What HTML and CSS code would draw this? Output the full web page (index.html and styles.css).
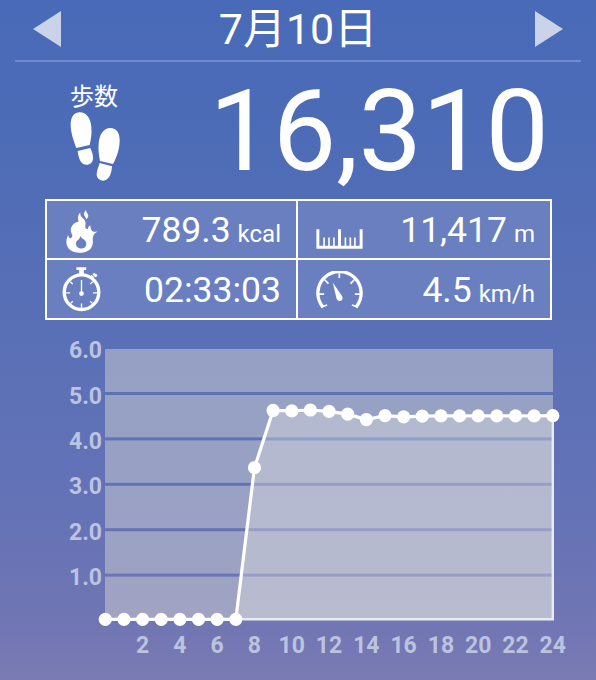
FILE: index.html
```html
<!DOCTYPE html>
<html lang="ja">
<head>
<meta charset="UTF-8">
<meta name="viewport" content="width=device-width, initial-scale=1.0">
<title>歩数計</title>
<link rel="stylesheet" href="styles.css">
</head>
<body>
    <div class="wrapper">
        <div class="header">
            <svg class="arrow" viewBox="0 0 28 36"><path d="M28 0V36L0 18Z"/></svg>
            <div class="date">7<span class="kanji">月</span>10<span class="kanji">日</span></div>
            <svg class="arrow" viewBox="0 0 28 36"><path d="M0 0V36L28 18Z"/></svg>
        </div>

        <div class="steps">
            <div class="steps-label">
                <span>歩数</span>
                <svg class="feet" viewBox="90 110 150 207">
                    <path d="M119 111C101 111 92 127 92 147C92 172 100 194 109 218L149 209C153 190 156 175 154 154C152 130 140 111 119 111Z"/>
                    <path d="M113 227L151 218C156 229 160 240 159 250C158 261 150 268 140 268C121 268 116 249 113 227Z"/>
                    <path d="M211 158C190 158 178 179 176 204C174 224 177 240 180 257L219 266C231 244 239 221 239 195C239 173 230 158 211 158Z"/>
                    <path d="M179 263L216 273C215 293 208 316 189 316C178 316 170 308 170 297C170 285 176 274 179 263Z"/>
                </svg>
            </div>
            <div class="steps-count">16,310</div>
        </div>

        <div class="stats">
            <div class="cell">
                <svg class="flame" viewBox="78 42 96 130">
                    <path fill-rule="evenodd" d="M121 49C112 59 113 68 116 77C102 80 92 91 92 103C92 110 96 114 97 120C96 126 91 129 87 126C85 124 85 120 85 117C80 125 77 136 80 147C84 163 99 171 119 171C140 171 155 162 158 146C160 137 157 129 160 121C162 114 167 111 173 107C165 108 158 108 155 103C152 99 152 94 151 89C146 91 144 95 144 99C139 101 135 97 136 91C137 83 138 77 132 70C126 64 119 60 121 49ZM121 119C122 127 127 128 132 131C141 137 141 151 133 156C127 160 116 159 111 153C106 147 106 139 112 134C118 130 121 126 121 119Z"/>
                    <path d="M138 42C132 49 130 54 134 60C136 64 138 66 139 70C145 64 147 59 143 53C140 49 138 46 138 42Z"/>
                </svg>
                <div class="value">789.3<span class="unit">kcal</span></div>
            </div>
            <div class="cell">
                <svg class="ruler" viewBox="78 100 141 61">
                    <path d="M78 101H87V151H144V101H153V151H210V101H219V160H78ZM99 126H104V151H99ZM114 126H119V151H114ZM129 126H134V151H129ZM164 126H169V151H164ZM179 126H184V151H179ZM193 126H198V151H193Z"/>
                </svg>
                <div class="value">11,417<span class="unit">m</span></div>
            </div>
            <div class="cell">
                <svg class="watch" viewBox="65 217 116 134">
                    <path d="M108 218H137V226H130V240H116V226H108ZM152 240L161 247L156 253L149 247ZM160 234L171 241L166 248L156 240Z"/>
                    <circle class="line" cx="123" cy="292" r="51.5" stroke-width="10"/>
                    <path class="line" stroke-width="4" d="M123 256V292M123 326V338M77 294H89M157 294H169M90 261L97 268M156 261L149 268M90 326L97 319M156 326L149 319"/>
                    <circle cx="123" cy="296" r="7"/>
                </svg>
                <div class="value">02:33:03</div>
            </div>
            <div class="cell">
                <svg class="gauge" viewBox="78 225 141 115">
                    <path class="line" stroke-width="10" d="M99 335A65.500 65.500 0 1 1 198 335"/>
                    <path class="line" stroke-width="5" d="M148 232V246M84 295H102M195 295H213M104 252L115 263M193 252L182 263M94 334L111 328M203 334L186 328"/>
                    <path d="M128 260L155 299C160 306 158 313 152 315C145 317 140 313 139 306Z"/>
                </svg>
                <div class="value">4.5<span class="unit">km/h</span></div>
            </div>
        </div>

        <svg class="chart" id="chart" viewBox="0 330 596 350"></svg>
    </div>

<script>
  var chart = document.getElementById("chart");
  var left = 105.3, right = 552.8, top0 = 349, bottom = 619.3;
  var unit = 45.4;
  var step = (right - left) / 24;
  var speeds = [0, 0, 0, 0, 0, 0, 0, 0, 3.34, 4.6, 4.59, 4.61, 4.58, 4.52, 4.4, 4.485, 4.46,
    4.475, 4.48, 4.48, 4.48, 4.48, 4.48, 4.48, 4.485];

  var html = "";

  // plot background, one band for each 1.0 km/h
  for (var i = 0; i < 6; i++) {
    var lineY = 620.5 - i * unit;
    var bandTop = i === 5 ? top0 : lineY - unit + 1.5;
    var bandBottom = i === 0 ? 619.5 : lineY - 1.5;
    html += '<rect class="band" x="105" width="448" y="' + bandTop + '" height="' + (bandBottom - bandTop) + '"/>';
  }
  for (var n = 1; n <= 6; n++) {
    html += '<text class="axis y" x="102" y="' + (630.5 - n * unit) + '">' + n + '.0</text>';
  }
  for (var h = 2; h <= 24; h += 2) {
    html += '<text class="axis x" x="' + (left + h * step) + '" y="653">' + h + '</text>';
  }

  var points = speeds.map(function(s, k) {
    return [left + k * step, bottom - s * unit];
  });
  var path = "M" + points.join("L");
  html += '<path class="area" d="' + path + 'V' + bottom + 'H' + left + 'Z"/>';
  html += '<path class="frame" d="M' + points[24] + 'V' + bottom + 'H' + left + '"/>';
  html += '<path class="speed" d="' + path + '"/>';
  points.forEach(function(p) {
    html += '<circle class="dot" cx="' + p[0] + '" cy="' + p[1] + '" r="6.6"/>';
  });

  chart.innerHTML = html;
</script>

</body>
</html>
```
FILE: styles.css
```css
*{
    margin: 0;
    padding: 0;
    box-sizing: border-box;
}
body{
    font-family: Roboto, "Noto Sans CJK JP", sans-serif;
    color: #fff;
    overflow: hidden;
}
svg{
    display: block;
    fill: #fff;
}
.wrapper{
    width: 596px;
    height: 680px;
    background: linear-gradient(#496ab8 0%, #4b6bb7 15%, #5a70b6 50%, #6673b6 78%, #7276b3 93%, #7a7bb3 100%);
}
.header{
    display: flex;
    justify-content: space-between;
    align-items: center;
    height: 62px;
    margin: 0 15px;
    padding: 0 18px 2px;
    border-bottom: 2px solid #708cce;
}
.arrow{
    width: 28px;
    height: 36px;
    fill: #cbd3ea;
}
.date{
    font-size: 43px;
    line-height: 58px;
    white-space: nowrap;
}
.kanji{
    font-size: 43px;
    line-height: 1;
}
.steps{
    display: flex;
    justify-content: space-between;
    height: 137px;
    padding: 20px 47px 0 70px;
}
.steps-label{
    font-size: 24px;
    line-height: 31px;
}
.feet{
    width: 50px;
    height: 69px;
    margin-top: -1px;
}
.steps-count{
    font-size: 113px;
    line-height: 99px;
}
.stats{
    display: grid;
    grid-template-columns: 249px 252px;
    grid-template-rows: 57px 58px;
    gap: 2px;
    width: 507px;
    height: 121px;
    margin-left: 45px;
    border: 2px solid #fff;
    background: #fff;
}
.cell{
    display: flex;
    justify-content: space-between;
    align-items: center;
    padding: 0 15px;
    background: #697fbf;
}
.value{
    padding-top: 1px;
    font-size: 35.5px;
    line-height: 42px;
    white-space: nowrap;
}
.unit{
    margin-left: 7px;
    font-size: 24px;
    line-height: 1;
}
.line{
    fill: none;
    stroke: #fff;
}
.flame{
    width: 32px;
    height: 43px;
    margin: 3px 0 0 4px;
}
.watch{
    width: 39px;
    height: 45px;
}
.ruler{
    width: 47px;
    height: 20px;
    margin: 19px 0 0 3px;
}
.gauge{
    width: 47px;
    height: 38px;
    margin: 2px 0 0 3px;
}
.chart{
    width: 596px;
    height: 350px;
    margin-top: 10px;
}
.band{
    fill: #dbdbd4;
    fill-opacity: 0.45;
}
.area{
    fill: #dedee2;
    fill-opacity: 0.4;
}
.frame{
    fill: none;
    stroke: #e9ebf3;
    stroke-width: 2.4;
}
.speed{
    fill: none;
    stroke: #fff;
    stroke-width: 3.2;
}
.axis{
    fill: #bcc3df;
    font-size: 23px;
    font-weight: 700;
}
.axis.x{
    text-anchor: middle;
}
.axis.y{
    text-anchor: end;
}
```
